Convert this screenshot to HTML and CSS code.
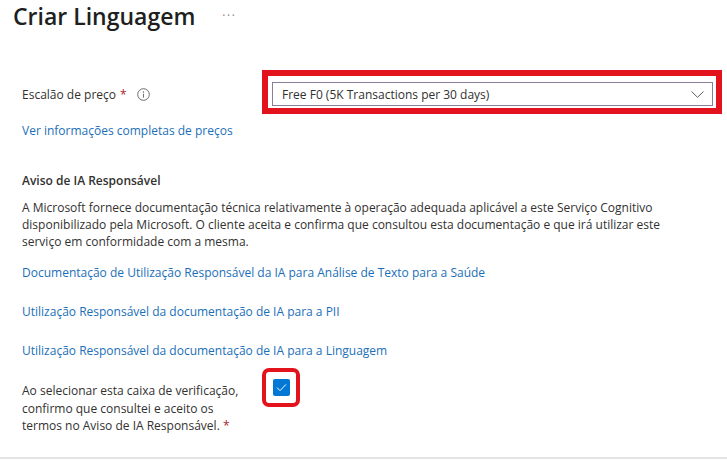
FILE: index.html
```html
<!DOCTYPE html>
<html lang="pt">
<head>
<meta charset="utf-8">
<title>Criar Linguagem</title>
<link rel="stylesheet" href="styles.css">
</head>
<body>
<div class="page">
  <header class="header">
    <h1 class="title">Criar Linguagem</h1>
    <span class="more">···</span>
  </header>

  <div class="form">
    <div class="row">
      <div class="label">
        <span>Escalão de preço</span><span class="req">*</span>
        <svg class="info" width="13" height="13" viewBox="0 0 13 13" aria-hidden="true">
          <circle cx="6.5" cy="6.5" r="5.8" fill="none" stroke="#605e5c" stroke-width="0.9"/>
          <circle cx="6.5" cy="4" r="0.7" fill="#605e5c"/>
          <line x1="6.5" y1="5.8" x2="6.5" y2="9.6" stroke="#605e5c" stroke-width="0.9"/>
        </svg>
      </div>
      <div class="annot annot-select">
        <div class="select">
          <span class="select-text">Free F0 (5K Transactions per 30 days)</span>
          <svg class="chev" width="13" height="7" viewBox="0 0 13 7" aria-hidden="true">
            <polyline points="0.5,0.5 6.5,6.3 12.5,0.5" fill="none" stroke="#605e5c" stroke-width="1"/>
          </svg>
        </div>
      </div>
    </div>

    <a class="link link-pricing" href="#">Ver informações completas de preços</a>

    <h2 class="section">Aviso de IA Responsável</h2>
    <p class="para">A Microsoft fornece documentação técnica relativamente à operação adequada aplicável a este Serviço Cognitivo<br>disponibilizado pela Microsoft. O cliente aceita e confirma que consultou esta documentação e que irá utilizar este<br>serviço em conformidade com a mesma.</p>

    <a class="link link-doc1" href="#">Documentação de Utilização Responsável da IA para Análise de Texto para a Saúde</a>
    <a class="link link-doc" href="#">Utilização Responsável da documentação de IA para a PII</a>
    <a class="link link-doc" href="#">Utilização Responsável da documentação de IA para a Linguagem</a>

    <div class="check-row">
      <div class="check-label">Ao selecionar esta caixa de verificação,<br>confirmo que consultei e aceito os<br>termos no Aviso de IA Responsável. <span class="req-inline">*</span></div>
      <div class="annot annot-check">
        <span class="checkbox">
          <svg width="11" height="9" viewBox="0 0 11 9" aria-hidden="true">
            <polyline points="1,4.6 4,7.6 10,1.4" fill="none" stroke="#ffffff" stroke-width="1"/>
          </svg>
        </span>
      </div>
    </div>
  </div>
</div>
</body>
</html>
```

FILE: styles.css
```css
* { box-sizing: border-box; }

html, body {
  margin: 0;
  padding: 0;
  background: #ffffff;
}

body {
  font-family: "Open Sans", "Noto Sans", "Liberation Sans", sans-serif;
  font-size: 12px;
  color: #323130;
}

.page {
  width: 727px;
  height: 459px;
  border-bottom: 2px solid #e3e3e3;
  overflow: hidden;
}

.header {
  display: flex;
  align-items: center;
  height: 32px;
  padding-left: 13px;
  margin-bottom: 38px;
}

.title {
  margin: 0;
  font-size: 23px;
  font-weight: 600;
  line-height: 32px;
  color: #201f1e;
}

.more {
  margin-left: 27px;
  font-size: 12px;
  color: #8a8886;
  line-height: 32px;
  letter-spacing: 1.5px;
}

.form {
  padding-left: 22px;
}

.row {
  display: flex;
  align-items: center;
}

.label {
  width: 240px;
  display: flex;
  align-items: center;
  padding-top: 5px;
  line-height: 17px;
}

.req {
  color: #a4262c;
  margin-left: 4px;
}

.req-inline {
  color: #a4262c;
}

.info {
  margin-left: 10px;
}

.annot {
  border: 6px solid #e3131e;
}

.annot-select {
  width: 460px;
  height: 44px;
  padding: 6px 3px 2px 4px;
}

.select {
  height: 24px;
  border: 1px solid #8b7c98;
  display: flex;
  align-items: center;
  justify-content: space-between;
  padding: 0 8px 0 9px;
  line-height: 17px;
}

.select-text {
  color: #323130;
}

.chev {
  display: block;
}

.link {
  display: block;
  color: #1b6fb8;
  text-decoration: none;
  line-height: 17px;
}

.link-pricing {
  margin-top: 8px;
}

.section {
  margin: 33px 0 0 0;
  font-size: 12px;
  font-weight: 600;
  line-height: 17px;
  color: #323130;
}

.para {
  margin: 10px 0 0 0;
  line-height: 17px;
}

.link-doc1 {
  margin-top: 14px;
}

.link-doc {
  margin-top: 22px;
}

.check-row {
  display: flex;
  align-items: flex-start;
  margin-top: 9px;
}

.check-label {
  width: 240px;
  padding-top: 14px;
  line-height: 17.5px;
}

.annot-check {
  width: 38px;
  height: 39px;
  border-width: 4px;
  border-radius: 7px;
  display: flex;
  align-items: center;
  justify-content: center;
}

.checkbox {
  width: 17px;
  height: 17px;
  background: #0078d4;
  border-radius: 2px;
  display: flex;
  align-items: center;
  justify-content: center;
}

.checkbox svg {
  display: block;
}
```
